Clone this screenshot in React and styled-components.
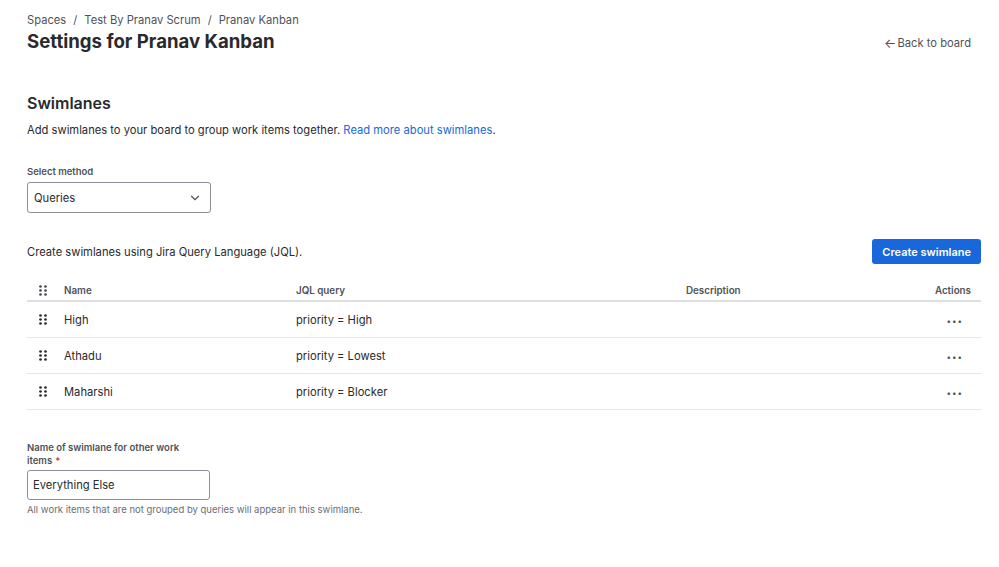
import styled, { createGlobalStyle } from "styled-components";

const lanes = [
  { name: "High", query: "priority = High" },
  { name: "Athadu", query: "priority = Lowest" },
  { name: "Maharshi", query: "priority = Blocker" },
];

const DragHandle = ({ light }) => (
  <svg width="8" height="11" viewBox="0 0 8 11">
    {[1.5, 5.5, 9.5].map((y) =>
      [1.5, 6.5].map((x) => (
        <circle key={`${x}-${y}`} cx={x} cy={y} r="1.35" fill={light ? "#44474E" : "#292A2E"} />
      ))
    )}
  </svg>
);

const Chevron = () => (
  <svg width="10" height="6" viewBox="0 0 10 6">
    <path d="M1.5 1.2 5 4.6 8.5 1.2" fill="none" stroke="#505258" strokeWidth="1.2" strokeLinecap="round" />
  </svg>
);

const App = () => {
  return (
    <>
      <GlobalStyle />
      <Page>
        <Header>
          <div>
            <Breadcrumbs>
              <Crumb>Spaces</Crumb>
              <Sep>/</Sep>
              <Crumb>Test By Pranav Scrum</Crumb>
              <Sep>/</Sep>
              <Crumb>Pranav Kanban</Crumb>
            </Breadcrumbs>
            <Title>Settings for Pranav Kanban</Title>
          </div>
          <BackLink href="#">
            <span>←</span>Back to board
          </BackLink>
        </Header>

        <SectionTitle>Swimlanes</SectionTitle>
        <Description>
          Add swimlanes to your board to group work items together.{" "}
          <TextLink href="#">Read more about swimlanes</TextLink>.
        </Description>

        <FieldLabel>Select method</FieldLabel>
        <Select>
          <span>Queries</span>
          <Chevron />
        </Select>

        <ToolbarRow>
          <Description>Create swimlanes using Jira Query Language (JQL).</Description>
          <PrimaryButton>Create swimlane</PrimaryButton>
        </ToolbarRow>

        <Table>
          <HeadRow>
            <HandleCell>
              <DragHandle light />
            </HandleCell>
            <span>Name</span>
            <span>JQL query</span>
            <span>Description</span>
            <ActionsCell>Actions</ActionsCell>
          </HeadRow>
          {lanes.map((lane) => (
            <Row key={lane.name}>
              <HandleCell>
                <DragHandle />
              </HandleCell>
              <span>{lane.name}</span>
              <span>{lane.query}</span>
              <span />
              <ActionsCell>
                <MoreDots>•••</MoreDots>
              </ActionsCell>
            </Row>
          ))}
        </Table>

        <OtherField>
          <FieldLabel $wrap>
            <LabelLine>Name of swimlane for other work</LabelLine>
            <LabelLine>
              items<Required>*</Required>
            </LabelLine>
          </FieldLabel>
          <TextInput defaultValue="Everything Else" />
          <Helper>All work items that are not grouped by queries will appear in this swimlane.</Helper>
        </OtherField>
      </Page>
    </>
  );
};

export default App;

const GlobalStyle = createGlobalStyle`
  body {
    margin: 0;
    background: #fff;
    font-family: Inter, "Noto Sans", sans-serif;
    color: #292A2E;
  }
  * { box-sizing: border-box; }
`;

const Page = styled.div`
  padding: 12px 18px 0 27px;
`;

const Header = styled.div`
  display: flex;
  justify-content: space-between;
  align-items: flex-end;
`;

const Breadcrumbs = styled.div`
  display: flex;
  align-items: center;
  font-size: 11.2px;
  line-height: 16px;
  color: #505258;
`;

const Crumb = styled.span``;

const Sep = styled.span`
  margin: 0 7px;
`;

const Title = styled.h1`
  margin: 1px 0 0;
  font-size: 18.6px;
  line-height: 24px;
  font-weight: 650;
  color: #292A2E;
`;

const BackLink = styled.a`
  display: flex;
  align-items: center;
  margin-right: 10px;
  font-size: 11.2px;
  line-height: 20px;
  color: #505258;
  text-decoration: none;
  span {
    font-size: 13px;
    margin-right: 1px;
  }
`;

const SectionTitle = styled.h2`
  margin: 40px 0 0;
  font-size: 16px;
  line-height: 20px;
  font-weight: 600;
`;

const Description = styled.p`
  margin: 7px 0 0;
  font-size: 11.2px;
  line-height: 20px;
  color: #292A2E;
`;

const TextLink = styled.a`
  color: #1868DB;
  text-decoration: none;
`;

const FieldLabel = styled.label`
  display: block;
  margin-top: ${(p) => (p.$wrap ? "0" : "24px")};
  font-size: 9.5px;
  line-height: ${(p) => (p.$wrap ? "13px" : "16px")};
  font-weight: 600;
  color: #505258;
`;

const LabelLine = styled.span`
  display: block;
`;

const Required = styled.span`
  margin-left: 3px;
  color: #C9372C;
`;

const Select = styled.div`
  margin-top: 2px;
  width: 184px;
  height: 31px;
  border: 1px solid #8C8F97;
  border-radius: 3px;
  display: flex;
  align-items: center;
  justify-content: space-between;
  padding: 0 10px 0 6px;
  font-size: 11.2px;
  color: #292A2E;
`;

const ToolbarRow = styled.div`
  margin-top: 26px;
  display: flex;
  justify-content: space-between;
  align-items: center;
  ${Description} {
    margin: 0;
  }
`;

const PrimaryButton = styled.button`
  height: 25px;
  padding: 0 10px;
  border: none;
  border-radius: 3px;
  background: #1868DB;
  color: #fff;
  font-family: inherit;
  font-size: 11px;
  font-weight: 600;
  cursor: pointer;
`;

const Table = styled.div`
  margin-top: 12px;
`;

const gridCols = `
  display: grid;
  grid-template-columns: 37px 232px 390px 1fr auto;
  align-items: center;
`;

const HeadRow = styled.div`
  ${gridCols}
  height: 26px;
  padding-top: 5px;
  border-bottom: 2px solid #DDDEE1;
  font-size: 9.8px;
  font-weight: 600;
  color: #505258;
`;

const Row = styled.div`
  ${gridCols}
  height: 36px;
  border-bottom: 1px solid #E4E5E8;
  font-size: 11.2px;
  color: #292A2E;
`;

const HandleCell = styled.span`
  display: flex;
  padding-left: 12px;
`;

const ActionsCell = styled.span`
  padding-right: 10px;
  text-align: right;
`;

const MoreDots = styled.span`
  margin-right: 8px;
  font-size: 8px;
  letter-spacing: 1px;
  color: #505258;
`;

const OtherField = styled.div`
  margin-top: 31px;
`;

const TextInput = styled.input`
  display: block;
  margin-top: 3px;
  width: 183px;
  height: 30px;
  border: 1px solid #8C8F97;
  border-radius: 3px;
  padding: 0 5px;
  font-family: inherit;
  font-size: 11.2px;
  color: #292A2E;
  outline: none;
`;

const Helper = styled.div`
  margin-top: 3px;
  font-size: 9.5px;
  line-height: 14px;
  color: #6B6E76;
`;
